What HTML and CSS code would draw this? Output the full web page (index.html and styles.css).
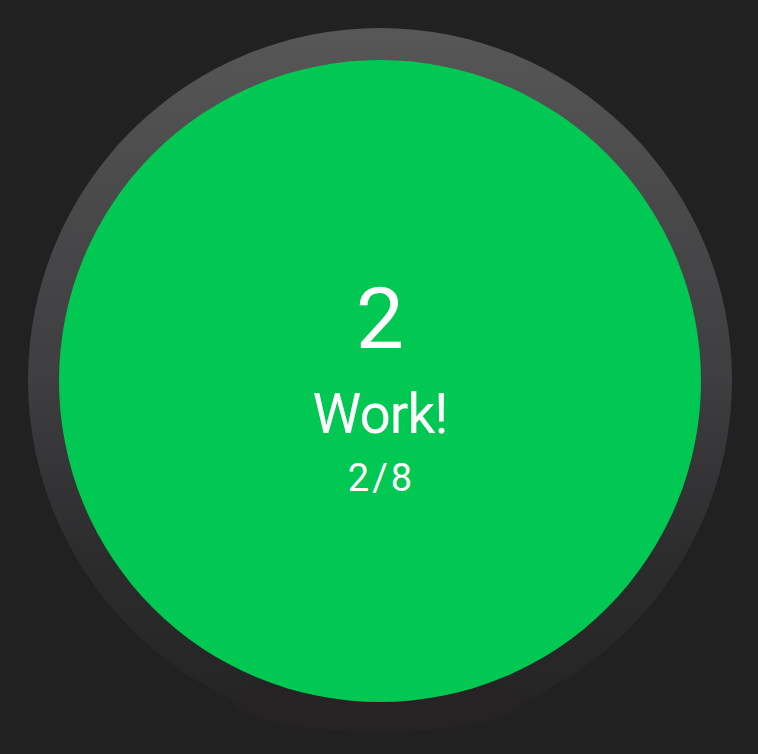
FILE: index.html
```html
<!DOCTYPE html>
<html>
<head>
<meta charset="utf-8">
<link rel="stylesheet" href="styles.css">
</head>
<body>
<div class="stage">
  <div class="ring">
    <div class="face">
      <div class="count">2</div>
      <div class="label">Work!</div>
      <div class="progress">2/8</div>
    </div>
  </div>
</div>
</body>
</html>
```

FILE: styles.css
```css
html, body {
  margin: 0;
  padding: 0;
  background: #212121;
}
.stage {
  width: 758px;
  height: 754px;
  display: flex;
  justify-content: center;
  align-items: flex-start;
  padding-top: 28px;
  box-sizing: border-box;
}
.ring {
  position: relative;
  width: 704px;
  height: 704px;
  margin-left: 2px;
  border-radius: 50%;
  background: linear-gradient(180deg, #575758 0%, #49494a 25%, #3e3e40 50%, #2c2c2d 75%, #232323 100%);
  display: flex;
  justify-content: center;
  align-items: center;
}
.ring::after {
  content: "";
  position: absolute;
  left: 205px;
  top: 640px;
  width: 290px;
  height: 64px;
  border-radius: 50%;
  background: radial-gradient(ellipse at 50% 50%, #282324 0%, #272324 60%, rgba(36,36,36,0) 100%);
  z-index: 0;
}
.face {
  position: relative;
  z-index: 1;
  width: 642px;
  height: 642px;
  margin-top: 2px;
  padding-top: 216px;
  box-sizing: border-box;
  border-radius: 50%;
  background: #00c853;
  color: #ffffff;
  font-family: Roboto, "Noto Sans", sans-serif;
  display: flex;
  flex-direction: column;
  align-items: center;
  justify-content: flex-start;
}
.count {
  font-size: 86px;
  font-weight: 400;
  line-height: 86px;
}
.label {
  font-size: 55px;
  line-height: 60px;
  letter-spacing: -1px;
  margin-top: 22px;
}
.progress {
  font-size: 38px;
  line-height: 44px;
  letter-spacing: 3px;
  margin-top: 12px;
  margin-left: 3px;
}
```
